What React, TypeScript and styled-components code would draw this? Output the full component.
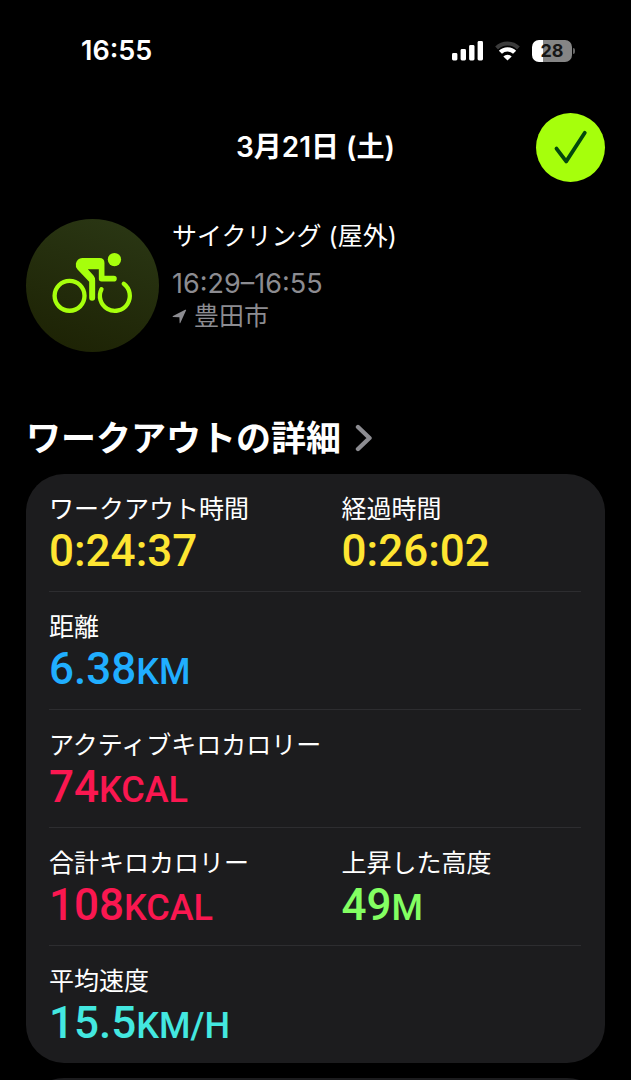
import React from "react";
import styled, { createGlobalStyle } from "styled-components";

const GlobalStyle = createGlobalStyle`
  * { box-sizing: border-box; }
  html, body { margin: 0; background: #000; }
  body {
    font-family: Inter, "Noto Sans CJK JP", sans-serif;
    color: #fff;
  }
`;

const Screen = styled.main`
  height: 100vh;
  overflow: hidden;
  display: flex;
  flex-direction: column;
  padding: 0 26px;
`;

const StatusBar = styled.div`
  flex: none;
  display: flex;
  align-items: center;
  justify-content: space-between;
  height: 102px;
  padding: 0 30px 0 55px;
`;

const Clock = styled.time`
  font-size: 27px;
  line-height: 32px;
  font-weight: 600;
`;

const StatusIcons = styled.div`
  display: flex;
  align-items: center;
  gap: 12px;
`;

const Battery = styled.div`
  display: flex;
  align-items: center;
  gap: 1px;
`;

const BatteryBody = styled.div`
  width: 40px;
  height: 22px;
  border-radius: 7px;
  background: linear-gradient(to right, #fff 28%, #858585 28%);
  color: #161616;
  font-size: 18px;
  line-height: 22px;
  font-weight: 700;
  text-align: center;
`;

const BatteryNub = styled.div`
  width: 2px;
  height: 6px;
  border-radius: 0 2px 2px 0;
  background: #666;
`;

const NavBar = styled.header`
  flex: none;
  display: grid;
  grid-template-columns: 1fr auto 1fr;
  align-items: center;
  height: 90px;
`;

const PageTitle = styled.h1`
  grid-column: 2;
  margin: 0;
  font-size: 28px;
  line-height: 36px;
  font-weight: 600;
`;

const DoneButton = styled.button`
  justify-self: end;
  display: grid;
  place-items: center;
  width: 69px;
  height: 69px;
  padding: 0;
  border: 0;
  border-radius: 50%;
  background: #a6ff0c;
  cursor: pointer;
`;

const Summary = styled.section`
  flex: none;
  display: flex;
  gap: 13px;
  padding-top: 27px;
`;

const ActivityBadge = styled.div`
  flex: none;
  width: 133px;
  height: 133px;
  border-radius: 50%;
  background: linear-gradient(20deg, #1c2103, #2b3815);
`;

const SummaryText = styled.div`
  display: flex;
  flex-direction: column;
  padding-top: 1px;
`;

const ActivityName = styled.h2`
  margin: 0 0 16px;
  font-size: 25px;
  line-height: 32px;
  font-weight: 400;
`;

const Meta = styled.div`
  display: flex;
  align-items: center;
  gap: 7px;
  font-size: 25px;
  line-height: 32px;
  color: #8c8c91;
`;

const TimeRange = styled(Meta)`
  font-size: 27px;
`;

const SectionLink = styled.a`
  flex: none;
  align-self: flex-start;
  display: flex;
  align-items: center;
  gap: 14px;
  margin: 60px 0 10px;
  height: 52px;
  color: inherit;
  text-decoration: none;
`;

const SectionTitle = styled.h2`
  margin: 0;
  font-size: 35px;
  line-height: 52px;
  font-weight: 600;
`;

const Card = styled.section`
  flex: none;
  margin-bottom: 15px;
  padding: 0 24px 0 23px;
  border-radius: 38px;
  background: #1c1c1e;
`;

const NextCard = styled(Card)`
  height: 120px;
`;

const MetricRow = styled.div`
  display: grid;
  grid-template-columns: 55fr 45fr;
  padding: 19px 0 14px;

  & + & { border-top: 1px solid #2d2d30; }
`;

const MetricLabel = styled.div`
  font-size: 25px;
  line-height: 32px;
`;

const MetricValue = styled.div<{ $color: string }>`
  font-family: Roboto, sans-serif;
  font-size: 44px;
  line-height: 52px;
  font-weight: 500;
  color: ${(p) => p.$color};
`;

const Unit = styled.span`
  font-size: 36px;
  line-height: 1;
`;

type Metric = { label: string; value: string; unit?: string; color: string };

const rows: Metric[][] = [
  [
    { label: "ワークアウト時間", value: "0:24:37", color: "#fee532" },
    { label: "経過時間", value: "0:26:02", color: "#fee532" },
  ],
  [{ label: "距離", value: "6.38", unit: "KM", color: "#20aeff" }],
  [{ label: "アクティブキロカロリー", value: "74", unit: "KCAL", color: "#fa1750" }],
  [
    { label: "合計キロカロリー", value: "108", unit: "KCAL", color: "#fa1750" },
    { label: "上昇した高度", value: "49", unit: "M", color: "#83ff62" },
  ],
  [{ label: "平均速度", value: "15.5", unit: "KM/H", color: "#43e8e0" }],
];

const SignalIcon = () => (
  <svg width="31" height="20" viewBox="0 0 31 20" fill="#fff" aria-hidden="true">
    <rect x="0" y="12" width="5.4" height="7.4" rx="1.4" />
    <rect x="8.6" y="8" width="5.4" height="11.4" rx="1.4" />
    <rect x="17.1" y="4" width="5.4" height="15.4" rx="1.4" />
    <rect x="25.6" y="0" width="5.4" height="19.4" rx="1.4" />
  </svg>
);

const WifiIcon = () => (
  <svg width="25" height="20" viewBox="0 0 25 20" fill="none" aria-hidden="true">
    <path d="M1.6 7 A15.4 15.4 0 0 1 23.4 7" stroke="#3b3b3b" strokeWidth="4" />
    <path d="M5.4 11.3 A10 10 0 0 1 19.6 11.3" stroke="#fff" strokeWidth="4.4" />
    <path d="M12.5 19.6 L8.3 15.4 A6 6 0 0 1 16.7 15.4 Z" fill="#fff" />
  </svg>
);

const CheckIcon = () => (
  <svg width="36" height="36" viewBox="0 0 36 36" fill="none" aria-hidden="true">
    <path d="M3.5 19.6 L13.2 32.4 L31.8 3.8" stroke="#03480c" strokeWidth="3.8" strokeLinecap="round" strokeLinejoin="round" />
  </svg>
);

const CyclingIcon = () => (
  <svg width="133" height="133" viewBox="32 27 400 400" fill="none" aria-hidden="true">
    <g stroke="#a6ff0c" strokeWidth="13" strokeLinecap="round" strokeLinejoin="round">
      <circle cx="163" cy="258" r="45" />
      <path d="M259 238 A45 45 0 1 0 326 222" />
    </g>
    <circle cx="298" cy="149" r="20" fill="#a6ff0c" />
    <path
      fill="#a6ff0c"
      d="M201 144 H253 Q268 144 268 159 V198 H296 Q305 198 305 206.5 Q305 215 296 215 H259 Q251 215 251 207 V178 H218 L235 197 Q240 203 240 211 V264 Q240 273 231 273 Q222 273 222 264 V216 L187 179 Q180 171 182 161 Q186 145 201 144 Z"
    />
  </svg>
);

const LocationIcon = () => (
  <svg width="15" height="15" viewBox="0 0 15 15" fill="#8c8c91" aria-hidden="true">
    <path d="M14 1.6 L8.3 14 Q7.8 14.8 7.6 13.8 L7.4 8.3 L1 8 Q0 7.7 1 7.1 L13.2 0.8 Q14.6 0.3 14 1.6 Z" />
  </svg>
);

const ChevronIcon = () => (
  <svg width="18" height="28" viewBox="0 0 18 28" fill="none" aria-hidden="true">
    <path d="M3 3 L14.5 14 L3 25" stroke="#8c8c91" strokeWidth="4.4" strokeLinecap="round" strokeLinejoin="round" />
  </svg>
);

export default function App() {
  return (
    <>
      <GlobalStyle />
      <Screen lang="ja">
        <StatusBar>
          <Clock>16:55</Clock>
          <StatusIcons>
            <SignalIcon />
            <WifiIcon />
            <Battery>
              <BatteryBody>28</BatteryBody>
              <BatteryNub />
            </Battery>
          </StatusIcons>
        </StatusBar>
        <NavBar>
          <PageTitle>3月21日 (土)</PageTitle>
          <DoneButton aria-label="完了">
            <CheckIcon />
          </DoneButton>
        </NavBar>
        <Summary>
          <ActivityBadge>
            <CyclingIcon />
          </ActivityBadge>
          <SummaryText>
            <ActivityName>サイクリング (屋外)</ActivityName>
            <TimeRange>16:29–16:55</TimeRange>
            <Meta>
              <LocationIcon />
              豊田市
            </Meta>
          </SummaryText>
        </Summary>
        <SectionLink href="#details">
          <SectionTitle>ワークアウトの詳細</SectionTitle>
          <ChevronIcon />
        </SectionLink>
        <Card id="details">
          {rows.map((row) => (
            <MetricRow key={row[0].label}>
              {row.map((m) => (
                <div key={m.label}>
                  <MetricLabel>{m.label}</MetricLabel>
                  <MetricValue $color={m.color}>
                    {m.value}
                    {m.unit && <Unit>{m.unit}</Unit>}
                  </MetricValue>
                </div>
              ))}
            </MetricRow>
          ))}
        </Card>
        <NextCard />
      </Screen>
    </>
  );
}
